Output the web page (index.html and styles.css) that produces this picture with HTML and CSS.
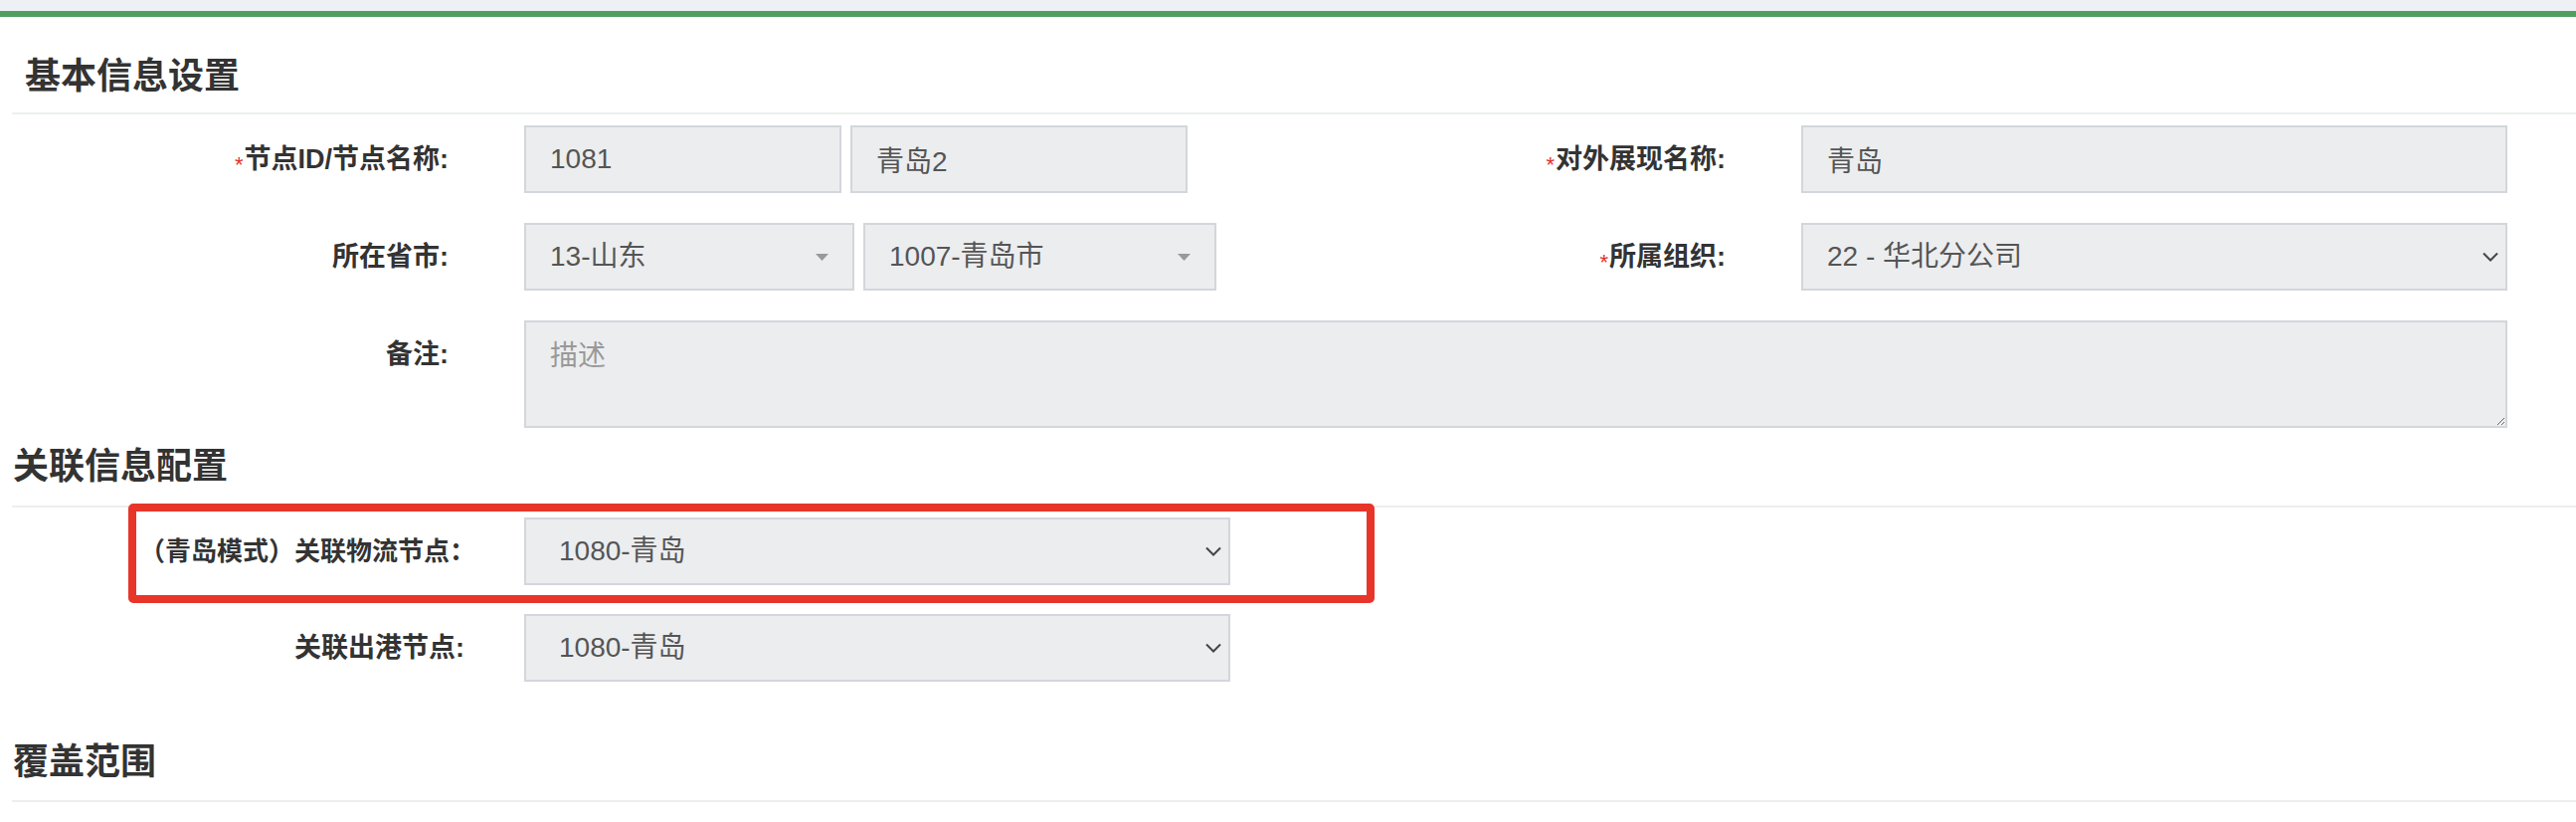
FILE: index.html
```html
<!DOCTYPE html>
<html lang="zh-CN">
<head>
<meta charset="utf-8">
<title>节点设置</title>
<link rel="stylesheet" href="styles.css">
</head>
<body>
<div class="topbar"></div>

<section class="section">
  <div class="section-head head-first">
    <h4 class="section-title title-indent">基本信息设置</h4>
  </div>
  <div class="grid-basic">
    <label class="label"><span class="req">*</span>节点ID/节点名称:</label>
    <div class="pair">
      <input class="ctl w-id" type="text" value="1081" readonly>
      <input class="ctl w-name" type="text" value="青岛2" readonly>
    </div>
    <label class="label"><span class="req">*</span>对外展现名称:</label>
    <input class="ctl" type="text" value="青岛" readonly>

    <label class="label">所在省市:</label>
    <div class="pair">
      <div class="ctl sel2 w-prov"><span>13-山东</span><svg class="tri" width="13" height="7" viewBox="0 0 13 7"><path d="M0 0H13L6.5 7Z" fill="#999"/></svg></div>
      <div class="ctl sel2 w-city"><span>1007-青岛市</span><svg class="tri" width="13" height="7" viewBox="0 0 13 7"><path d="M0 0H13L6.5 7Z" fill="#999"/></svg></div>
    </div>
    <label class="label"><span class="req">*</span>所属组织:</label>
    <div class="ctl native"><span>22 - 华北分公司</span><svg class="chev" width="16" height="10" viewBox="0 0 16 10"><path d="M1 1.5L8 8.5L15 1.5" fill="none" stroke="#444" stroke-width="2"/></svg></div>

    <label class="label">备注:</label>
    <textarea class="ctl area" placeholder="描述" readonly></textarea>
  </div>
</section>

<section class="section">
  <div class="section-head head-second">
    <h4 class="section-title">关联信息配置</h4>
  </div>
  <div class="grid-rel">
    <div class="mark"></div>
    <label class="label label-alt">（青岛模式）关联物流节点：</label>
    <div class="ctl native pad-wide"><span>1080-青岛</span><svg class="chev" width="16" height="10" viewBox="0 0 16 10"><path d="M1 1.5L8 8.5L15 1.5" fill="none" stroke="#444" stroke-width="2"/></svg></div>
    <label class="label">关联出港节点:</label>
    <div class="ctl native pad-wide"><span>1080-青岛</span><svg class="chev" width="16" height="10" viewBox="0 0 16 10"><path d="M1 1.5L8 8.5L15 1.5" fill="none" stroke="#444" stroke-width="2"/></svg></div>
  </div>
</section>

<section class="section">
  <div class="section-head head-third">
    <h4 class="section-title">覆盖范围</h4>
  </div>
</section>
</body>
</html>
```

FILE: styles.css
```css
html, body {
  margin: 0;
  padding: 0;
  background: #ffffff;
}

body {
  font-family: "Liberation Sans", "Noto Sans CJK SC", sans-serif;
  color: #333333;
  overflow: hidden;
}

.topbar {
  height: 11px;
  background: #edf1f6;
  border-bottom: 6px solid #509e60;
}

.section-head {
  margin-left: 12px;
  border-bottom: 2px solid #eceeef;
}

.head-first {
  padding-top: 40px;
  padding-bottom: 16px;
}

.head-second {
  margin-top: 19px;
  padding-bottom: 19px;
}

.head-third {
  margin-top: 61px;
  padding-bottom: 18px;
}

.section-title {
  margin: 0;
  padding-left: 1px;
  font-size: 36px;
  line-height: 40px;
  font-weight: 700;
  color: #333333;
}

.title-indent {
  padding-left: 13px;
}

.grid-basic {
  margin-top: 11px;
  display: grid;
  grid-template-columns: 451px 832px 300px 710px;
  grid-template-rows: 68px 68px 108px;
  column-gap: 76px;
  row-gap: 30px;
}

.grid-rel {
  position: relative;
  margin-top: 10px;
  display: grid;
  grid-template-columns: 467px 710px;
  grid-auto-rows: 68px;
  column-gap: 60px;
  row-gap: 29px;
}

.label {
  display: block;
  height: 68px;
  line-height: 68px;
  text-align: right;
  font-size: 27px;
  font-weight: 700;
  color: #333333;
  white-space: nowrap;
}

.label-alt {
  font-size: 26px;
  margin-right: -11px;
}

.req {
  color: #e4322b;
  font-size: 22px;
  font-weight: 400;
  margin-right: 1px;
  vertical-align: -4px;
}

.pair {
  display: flex;
  gap: 9px;
}

.ctl {
  box-sizing: border-box;
  height: 68px;
  margin: 0;
  padding: 0 0 0 24px;
  background: #ecedef;
  border: 2px solid #d3d6da;
  border-radius: 0;
  font-family: "Liberation Sans", "Noto Sans CJK SC", sans-serif;
  font-size: 28px;
  color: #555555;
  outline: none;
}

input.ctl {
  width: 100%;
}

.w-id { width: 319px !important; }
.w-name { width: 339px !important; }
.w-prov { width: 332px; }
.w-city { width: 355px; }

.sel2, .native {
  display: flex;
  align-items: center;
  justify-content: space-between;
  line-height: 64px;
}

.sel2 {
  padding-right: 24px;
}

.native {
  padding-right: 7px;
}

.pad-wide {
  padding-left: 33px;
}

.tri, .chev {
  flex: none;
}

.area {
  grid-column: 2 / 5;
  width: 100%;
  height: 108px;
  padding-top: 16px;
  resize: vertical;
  line-height: 1.3;
}

.area::placeholder {
  color: #999999;
}

.mark {
  position: absolute;
  left: 129px;
  top: -14px;
  width: 1253px;
  height: 100px;
  box-sizing: border-box;
  border: 8px solid #e8352a;
  border-radius: 5px;
  pointer-events: none;
}
```
